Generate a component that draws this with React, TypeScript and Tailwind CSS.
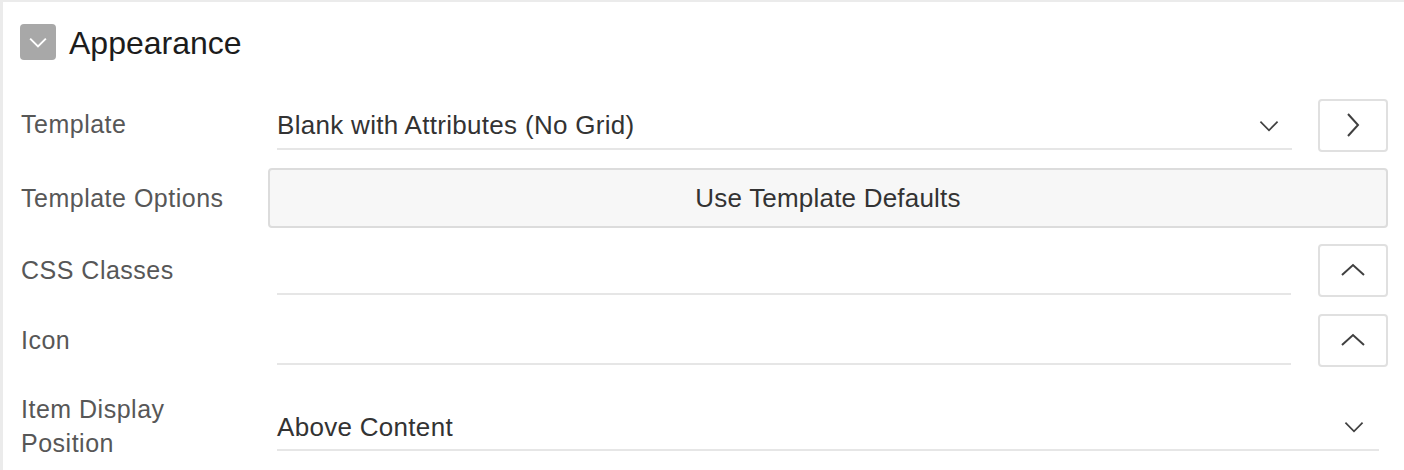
import React from "react";

const font = { fontFamily: '"Liberation Sans", Arial, sans-serif' };

function ChevronDown({ className = "", strokeWidth = 2 }: { className?: string; strokeWidth?: number }) {
  return (
    <svg viewBox="0 0 24 14" className={className} fill="none" stroke="currentColor" strokeWidth={strokeWidth}>
      <path d="M2 2 L12 12 L22 2" />
    </svg>
  );
}

function ChevronRight() {
  return (
    <svg viewBox="0 0 14 26" className="w-[14px] h-[26px] text-[#404040]" fill="none" stroke="currentColor" strokeWidth={2}>
      <path d="M2 2 L12 13 L2 24" />
    </svg>
  );
}

function ChevronUp() {
  return (
    <svg viewBox="0 0 26 14" className="w-[26px] h-[14px] text-[#404040]" fill="none" stroke="currentColor" strokeWidth={2}>
      <path d="M2 12 L13 2 L24 12" />
    </svg>
  );
}

function SideButton({ children }: { children: React.ReactNode }) {
  return (
    <button className="w-[70px] h-[53px] flex items-center justify-center rounded-[4px] border-2 border-[#e0e0e0] bg-white">
      {children}
    </button>
  );
}

function Label({ children, width = "w-[256px]" }: { children: React.ReactNode; width?: string }) {
  return (
    <div className={`${width} shrink-0 text-[25px] tracking-[0.5px] leading-[34px] text-[#575757]`}>{children}</div>
  );
}

export default function App() {
  return (
    <div className="w-[1404px] h-[470px] bg-white border-t-2 border-l-[3px] border-[#ebebeb] overflow-hidden" style={font}>
      <div className="flex items-start pl-[17px] pt-[22px]">
        <div className="w-[36px] h-[36px] rounded-[4px] bg-[#a8a8a8] flex items-center justify-center">
          <ChevronDown className="w-[20px] h-[11px] text-white" strokeWidth={2.5} />
        </div>
        <h2 className="ml-[13px] mt-[1px] text-[32px] leading-[36px] text-[#1c1c1c]">Appearance</h2>
      </div>

      <div className="pl-[18px] pr-[16px]">
        {/* Template */}
        <div className="flex items-center h-[58px] mt-[35px]">
          <Label>
            <div className="-mt-[2px]">Template</div>
          </Label>
          <div className="flex-1 h-[46px] mt-[3px] mr-[26px] flex items-center justify-between border-b-2 border-[#e6e6e6] text-[26px] tracking-[0.3px] text-[#333]">
            <span>Blank with Attributes (No Grid)</span>
            <ChevronDown className="w-[22px] h-[12px] text-[#404040] mr-[12px]" />
          </div>
          <SideButton>
            <ChevronRight />
          </SideButton>
        </div>

        {/* Template Options */}
        <div className="flex items-center h-[62px] mt-[13px]">
          <Label width="w-[247px]">Template Options</Label>
          <button className="flex-1 h-[60px] rounded-[4px] border-2 border-[#dcdcdc] bg-[#f7f7f7] text-[26px] tracking-[0.2px] text-[#333]">
            Use Template Defaults
          </button>
        </div>

        {/* CSS Classes */}
        <div className="flex items-center h-[58px] mt-[12px]">
          <Label>CSS Classes</Label>
          <div className="flex-1 h-[46px] mt-[4px] mr-[27px] border-b-2 border-[#e6e6e6]" />
          <SideButton>
            <ChevronUp />
          </SideButton>
        </div>

        {/* Icon */}
        <div className="flex items-center h-[58px] mt-[12px]">
          <Label>Icon</Label>
          <div className="flex-1 h-[46px] mt-[4px] mr-[27px] border-b-2 border-[#e6e6e6]" />
          <SideButton>
            <ChevronUp />
          </SideButton>
        </div>

        {/* Item Display Position */}
        <div className="flex items-center h-[70px] mt-[22px]">
          <Label>
            Item Display
            <br />
            Position
          </Label>
          <div className="flex-1 h-[46px] mt-[4px] mr-[9px] flex items-center justify-between border-b-2 border-[#e6e6e6] text-[26px] tracking-[0.3px] text-[#333]">
            <span>Above Content</span>
            <ChevronDown className="w-[22px] h-[12px] text-[#404040] mr-[14px]" />
          </div>
        </div>
      </div>
    </div>
  );
}
